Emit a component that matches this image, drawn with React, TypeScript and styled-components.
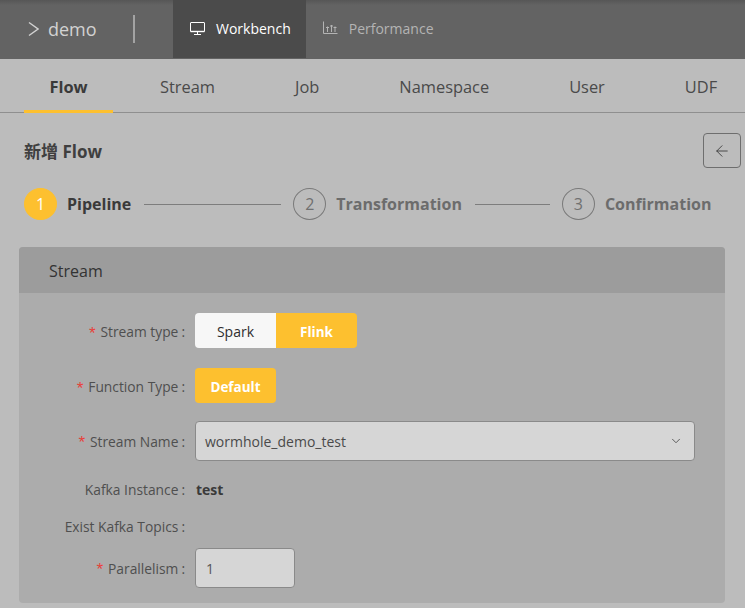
import React from "react"
import styled, { createGlobalStyle } from "styled-components"
import { ArrowLeft, ChevronDown } from "lucide-react"

const FONT = `"Open Sans", "Noto Sans CJK SC", sans-serif`

const Global = createGlobalStyle`
  html, body {
    margin: 0;
    padding: 0;
    background: #bcbcbc;
  }
  body {
    font-family: ${FONT};
    overflow: hidden;
  }
  * {
    box-sizing: border-box;
  }
`

const Page = styled.div`
  width: 745px;
  height: 608px;
  overflow: hidden;
`

const Header = styled.header`
  display: flex;
  height: 59px;
  padding-bottom: 1px;
  background: linear-gradient(to bottom, #565656 0, #636363 5px, #636363 100%);
`

const Brand = styled.div`
  display: flex;
  align-items: center;
  width: 173px;
  padding-left: 28px;
  color: #d2d2d2;
  font-size: 18px;
  span {
    margin-left: 9px;
  }
`

const Divider = styled.i`
  width: 2px;
  height: 28px;
  margin-left: 36px;
  background: #a3a3a3;
`

const NavItem = styled.div<{ $active?: boolean }>`
  display: flex;
  align-items: center;
  gap: 11px;
  padding: 0 15px 2px 17px;
  font-size: 14px;
  color: ${p => (p.$active ? "#ffffff" : "#b4b4b4")};
  background: ${p => (p.$active ? "#4b4b4b" : "transparent")};
`

const Tabs = styled.nav`
  display: flex;
  height: 54px;
  padding-left: 24px;
  border-bottom: 1px solid #8f8f8f;
`

const Tab = styled.div<{ $active?: boolean }>`
  display: flex;
  flex: none;
  align-items: center;
  justify-content: ${p => (p.$active ? "center" : "flex-start")};
  width: ${p => (p.$active ? "89px" : "auto")};
  height: 54px;
  padding: 4px 25px 0;
  margin-right: ${p => (p.$active ? 22 : 30)}px;
  font-size: 16.4px;
  white-space: nowrap;
  font-weight: ${p => (p.$active ? 700 : 400)};
  color: ${p => (p.$active ? "#3a3a3a" : "#4a4a4a")};
  border-bottom: 3px solid ${p => (p.$active ? "#fdc02f" : "transparent")};
`

const Content = styled.main`
  padding: 20px 4px 0 19px;
`

const TitleRow = styled.div`
  display: flex;
  align-items: center;
  justify-content: space-between;
  height: 35px;
  padding-left: 5px;
`

const Title = styled.h1`
  margin: 0;
  font-size: 17px;
  font-weight: 700;
  color: #3f3f3f;
`

const BackButton = styled.button`
  display: flex;
  align-items: center;
  justify-content: center;
  width: 38px;
  height: 35px;
  padding: 0;
  color: #3c3c3c;
  background: transparent;
  border: 1px solid #6e6e6e;
  border-radius: 4px;
`

const Steps = styled.div`
  display: flex;
  align-items: center;
  height: 32px;
  margin-top: 20px;
  padding-left: 5px;
`

const StepDot = styled.div<{ $active?: boolean }>`
  display: flex;
  flex: none;
  align-items: center;
  justify-content: center;
  width: 33px;
  height: 32px;
  border-radius: 50%;
  font-size: 16px;
  color: ${p => (p.$active ? "#ffffff" : "#707070")};
  background: ${p => (p.$active ? "#fdc02f" : "transparent")};
  border: 1px solid ${p => (p.$active ? "#fdc02f" : "#7a7a7a")};
`

const StepLabel = styled.div<{ $active?: boolean }>`
  margin-left: 10px;
  padding-bottom: 1px;
  font-size: 16px;
  font-weight: 700;
  white-space: nowrap;
  color: ${p => (p.$active ? "#3a3a3a" : "#6c6c6c")};
`

const StepLine = styled.div<{ $w: number }>`
  flex: none;
  width: ${p => p.$w}px;
  height: 1px;
  margin: 0 12px 0 13px;
  background: #7d7d7d;
`

const Panel = styled.section`
  width: 706px;
  height: 356px;
  margin-top: 27px;
  border-radius: 4px;
  background: #acacac;
  overflow: hidden;
`

const PanelHead = styled.div`
  display: flex;
  align-items: center;
  height: 46px;
  padding: 1px 0 0 30px;
  font-size: 16px;
  color: #333333;
  background: #9c9c9c;
`

const Form = styled.div`
  padding-top: 20px;
`

const Row = styled.div<{ $h: number; $mb: number }>`
  display: flex;
  align-items: center;
  height: ${p => p.$h}px;
  margin-bottom: ${p => p.$mb}px;
`

const Label = styled.label<{ $low?: boolean }>`
  display: flex;
  justify-content: flex-end;
  align-items: center;
  flex: none;
  width: 166px;
  margin-right: 10px;
  padding-top: ${p => (p.$low ? 2 : 0)}px;
  font-size: 13.8px;
  white-space: nowrap;
  color: #4f4f4f;
  &::after {
    content: ":";
    margin-left: 3px;
  }
`

const Star = styled.em`
  margin-right: 3px;
  font-family: "Liberation Mono", monospace;
  font-style: normal;
  font-size: 17px;
  line-height: 14px;
  color: #e8403a;
  transform: translateY(3px);
`

const Segments = styled.div`
  display: flex;
`

const Segment = styled.div<{ $on?: boolean; $only?: boolean; $first?: boolean }>`
  display: flex;
  align-items: center;
  justify-content: center;
  width: 81px;
  height: 35px;
  padding-top: 2px;
  font-size: ${p => (p.$on ? 13.5 : 14)}px;
  font-weight: ${p => (p.$on ? 700 : 500)};
  color: ${p => (p.$on ? "#ffffff" : "#2e2e2e")};
  background: ${p => (p.$on ? "#fdc02f" : "#f7f7f7")};
  border-radius: ${p => (p.$only ? "4px" : p.$first ? "4px 0 0 4px" : "0 4px 4px 0")};
`

const Select = styled.div`
  display: flex;
  align-items: center;
  justify-content: space-between;
  width: 500px;
  height: 40px;
  padding: 0 11px 0 9px;
  font-size: 14px;
  color: #4a4a4a;
  background: #d6d6d6;
  border: 1px solid #8a8a8a;
  border-radius: 4px;
`

const Value = styled.strong`
  margin-left: 1px;
  font-size: 14px;
  font-weight: 700;
  color: #3a3a3a;
`

const NumberBox = styled.div`
  display: flex;
  align-items: center;
  width: 100px;
  height: 40px;
  padding-left: 10px;
  font-size: 14px;
  color: #555555;
  background: #d6d6d6;
  border: 1px solid #8a8a8a;
  border-radius: 4px;
`

const MonitorIcon = () => (
  <svg width="15" height="13" viewBox="0 0 15 13" fill="none" stroke="#ffffff" strokeWidth="1">
    <rect x="0.5" y="0.5" width="14" height="9" rx="0.5" />
    <path d="M0.5 9.5h14" strokeWidth="1.4" />
    <path d="M7.5 10v2.5M4 12.5h7" />
  </svg>
)

const BarsIcon = () => (
  <svg width="15" height="14" viewBox="0 0 15 14" fill="none" stroke="#b4b4b4" strokeWidth="1">
    <path d="M0.5 0.5V12.5H14.5" />
    <path d="M4.5 5.5v5.5M8.5 4v7M12 5.5v5.5" />
    <path d="M3 6.5h3M7 5h3M10.5 6.5h3" />
  </svg>
)

const BrandChevron = () => (
  <svg width="11" height="16" viewBox="0 0 11 16" fill="none" stroke="#d2d2d2" strokeWidth="1.4">
    <path d="M1 1.5L10 8L1 14.5" />
  </svg>
)

const tabs = ["Flow", "Stream", "Job", "Namespace", "User", "UDF"]

export default function App() {
  return (
    <Page>
      <Global />
      <Header>
        <Brand>
          <BrandChevron />
          <span>demo</span>
          <Divider />
        </Brand>
        <NavItem $active>
          <MonitorIcon />
          Workbench
        </NavItem>
        <NavItem>
          <BarsIcon />
          Performance
        </NavItem>
      </Header>
      <Tabs>
        {tabs.map((t, i) => (
          <Tab key={t} $active={i === 0}>
            {t}
          </Tab>
        ))}
      </Tabs>
      <Content>
        <TitleRow>
          <Title>新增 Flow</Title>
          <BackButton>
            <ArrowLeft size={18} strokeWidth={1.2} />
          </BackButton>
        </TitleRow>
        <Steps>
          <StepDot $active>1</StepDot>
          <StepLabel $active>Pipeline</StepLabel>
          <StepLine $w={137} />
          <StepDot>2</StepDot>
          <StepLabel>Transformation</StepLabel>
          <StepLine $w={75} />
          <StepDot>3</StepDot>
          <StepLabel>Confirmation</StepLabel>
        </Steps>
        <Panel>
          <PanelHead>Stream</PanelHead>
          <Form>
            <Row $h={35} $mb={20}>
              <Label $low>
                <Star>*</Star>Stream type
              </Label>
              <Segments>
                <Segment $first>Spark</Segment>
                <Segment $on>Flink</Segment>
              </Segments>
            </Row>
            <Row $h={35} $mb={18}>
              <Label $low>
                <Star>*</Star>Function Type
              </Label>
              <Segment $on $only>
                Default
              </Segment>
            </Row>
            <Row $h={40} $mb={17}>
              <Label>
                <Star>*</Star>Stream Name
              </Label>
              <Select>
                wormhole_demo_test
                <ChevronDown size={14} strokeWidth={1.5} />
              </Select>
            </Row>
            <Row $h={22} $mb={15}>
              <Label>Kafka Instance</Label>
              <Value>test</Value>
            </Row>
            <Row $h={22} $mb={11}>
              <Label>Exist Kafka Topics</Label>
            </Row>
            <Row $h={40} $mb={0}>
              <Label>
                <Star>*</Star>Parallelism
              </Label>
              <NumberBox>1</NumberBox>
            </Row>
          </Form>
        </Panel>
      </Content>
    </Page>
  )
}
